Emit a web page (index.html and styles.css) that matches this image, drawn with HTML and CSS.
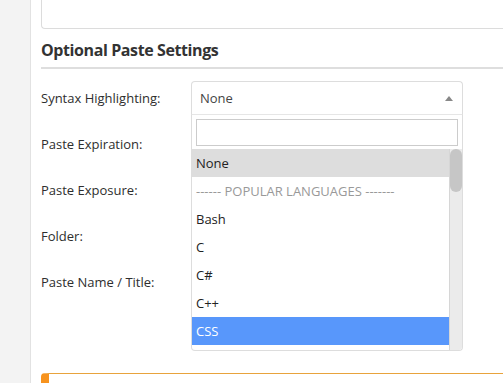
FILE: index.html
```html
<!DOCTYPE html>
<html>
<head>
<meta charset="utf-8">
<link rel="stylesheet" href="styles.css">
</head>
<body>
<div class="page">
  <aside class="sidebar"></aside>
  <main class="main">
    <div class="textarea"></div>
    <h2 class="heading">Optional Paste Settings</h2>
    <div class="rows">
      <div class="row">
        <label class="label">Syntax Highlighting:</label>
        <div class="field">
          <div class="select">
            <span class="select-value">None</span>
            <span class="arrow"></span>
          </div>
          <div class="dropdown">
            <div class="search"><input class="search-input" type="text"></div>
            <div class="results-wrap">
              <ul class="results">
                <li class="opt opt-gray">None</li>
                <li class="opt opt-group">------ POPULAR LANGUAGES -------</li>
                <li class="opt">Bash</li>
                <li class="opt">C</li>
                <li class="opt">C#</li>
                <li class="opt">C++</li>
                <li class="opt opt-active">CSS</li>
              </ul>
              <div class="scrollbar"><div class="thumb"></div></div>
            </div>
          </div>
        </div>
      </div>
      <div class="row"><label class="label">Paste Expiration:</label><div class="field"></div></div>
      <div class="row"><label class="label">Paste Exposure:</label><div class="field"></div></div>
      <div class="row"><label class="label">Folder:</label><div class="field"></div></div>
      <div class="row"><label class="label">Paste Name / Title:</label><div class="field"></div></div>
    </div>
    <div class="notice"></div>
  </main>
</div>
</body>
</html>
```

FILE: styles.css
```css
* { box-sizing: border-box; }
html, body { margin: 0; padding: 0; }
body {
  font-family: "Open Sans", "DejaVu Sans", sans-serif;
  color: #333;
  background: #fff;
  overflow: hidden;
  width: 503px;
  height: 383px;
}
.page { display: flex; height: 383px; overflow: hidden; }
.sidebar {
  width: 31px;
  flex: none;
  background: #f3f3f3;
  border-right: 1px solid #e2e2e2;
}
.main {
  flex: none;
  width: 472px;
  padding-left: 10px;
}
.textarea {
  height: 29px;
  border: 1px solid #dcdcdc;
  border-top: none;
  border-right: none;
  border-radius: 0 0 0 4px;
}
.heading {
  margin: 0;
  padding-top: 10px;
  height: 40px;
  font-size: 16px;
  letter-spacing: -0.4px;
  font-weight: 700;
  color: #333;
  line-height: 22px;
  border-bottom: 2px solid #dedede;
}
.rows {
  padding-top: 12px;
  display: flex;
  flex-direction: column;
  gap: 12px;
}
.row {
  display: flex;
  align-items: center;
  height: 34px;
}
.label {
  width: 150px;
  flex: none;
  font-size: 13px;
  color: #2e2e2e;
}
.field { position: relative; width: 272px; height: 34px; }
.select {
  height: 34px;
  border: 1px solid #ddd;
  border-bottom-color: #e6e6e6;
  border-radius: 4px 4px 0 0;
  display: flex;
  align-items: center;
  padding: 0 8px;
  font-size: 13px;
  color: #444;
}
.select-value { flex: 1; }
.arrow {
  width: 0; height: 0;
  border-left: 4px solid transparent;
  border-right: 4px solid transparent;
  border-bottom: 5px solid #888;
  margin-right: 1px;
}
.dropdown {
  position: absolute;
  left: 0; top: 34px;
  width: 272px;
  background: #fff;
  border: 1px solid #ddd;
  border-top: none;
  border-radius: 0 0 4px 4px;
  z-index: 5;
}
.search { padding: 4px 4px 3px 4px; }
.search-input {
  display: block;
  width: 100%;
  height: 27px;
  border: 1px solid #ccc;
  margin: 0;
  outline: none;
}
.results-wrap {
  display: flex;
  height: 201px;
}
.results {
  flex: 1;
  list-style: none;
  margin: 0;
  padding: 0;
  overflow: hidden;
}
.scrollbar {
  width: 13px;
  flex: none;
  background: #ebebeb;
  border-left: 1px solid #d6d6d6;
  border-radius: 0 0 3px 0;
}
.thumb {
  height: 43px;
  width: 12px;
  background: #c6c6c6;
  border-radius: 6px;
}
.opt {
  height: 28px;
  line-height: 29px;
  padding-left: 4px;
  font-size: 13px;
  color: #222;
  white-space: nowrap;
}
.opt-gray { background: #ddd; }
.opt-group { color: #999; }
.opt-active { background: #5897fb; color: #fff; }
.notice {
  margin-top: 74px;
  height: 10px;
  border-top: 1px solid #e8a33d;
  border-left: 8px solid #f7931e;
  border-radius: 4px 0 0 0;
}
```
